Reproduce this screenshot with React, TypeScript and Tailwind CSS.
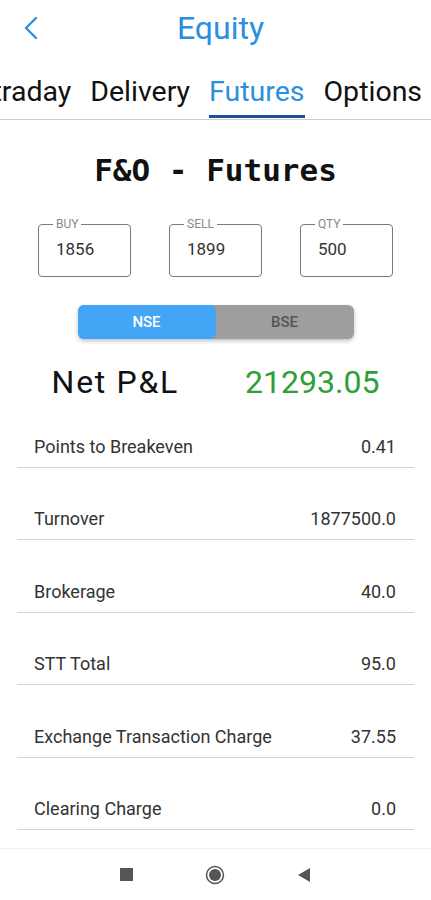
import React, { useState } from "react";

const rows: { label: string; value: string }[] = [
  { label: "Points to Breakeven", value: "0.41" },
  { label: "Turnover", value: "1877500.0" },
  { label: "Brokerage", value: "40.0" },
  { label: "STT Total", value: "95.0" },
  { label: "Exchange Transaction Charge", value: "37.55" },
  { label: "Clearing Charge", value: "0.0" },
];

const tabs = ["Intraday", "Delivery", "Futures", "Options"];

const App: React.FC = () => {
  const [exchange, setExchange] = useState<"NSE" | "BSE">("NSE");

  return (
    <div
      className="flex h-[900px] w-[431px] flex-col overflow-hidden bg-white"
      style={{ fontFamily: "Roboto, 'Noto Sans', sans-serif" }}
    >
      <div className="flex-1 overflow-hidden">
        {/* Header */}
        <div className="flex h-[56px] items-center">
          <div className="flex w-[62px] justify-start pl-[22px]">
            <svg width="18" height="26" viewBox="0 0 18 26" fill="none">
              <path
                d="M14 3 L4 13 L14 23"
                stroke="#2a8fe0"
                strokeWidth="2.4"
                strokeLinecap="round"
                strokeLinejoin="round"
              />
            </svg>
          </div>
          <div className="flex-1 text-center text-[32px] leading-[36px] text-[#2a8fe0]">
            Equity
          </div>
          <div className="w-[52px]" />
        </div>

        {/* Tabs */}
        <div className="flex h-[64px] items-end gap-[19px] overflow-hidden whitespace-nowrap border-b border-[#cfcfcf]">
          {tabs.map((t, i) => (
            <div key={t} className={`flex flex-col ${i === 0 ? "ml-[-31px]" : ""}`}>
              <span
                className={`text-[28.5px] leading-[30px] ${
                  t === "Futures" ? "text-[#2a8fe0]" : "text-[#111]"
                }`}
              >
                {t}
              </span>
              <div
                className={`mb-[1px] mt-[8px] h-[3px] ${
                  t === "Futures" ? "bg-[#1b4f99]" : "bg-transparent"
                }`}
              />
            </div>
          ))}
        </div>

        {/* Title */}
        <div
          className="mt-[32px] text-center text-[31px] font-bold leading-[36px] text-[#111]"
          style={{ fontFamily: "'DejaVu Sans Mono', 'Liberation Mono', monospace" }}
        >
          F&amp;O - Futures
        </div>

        {/* Inputs */}
        <div className="mt-[36px] flex justify-center gap-[38px]">
          {[
            { label: "BUY", value: "1856" },
            { label: "SELL", value: "1899" },
            { label: "QTY", value: "500" },
          ].map((f) => (
            <div
              key={f.label}
              className="relative flex h-[53px] w-[93px] items-center rounded-[4px] border border-[#7a7a7a] pb-[2px] pl-[17px] text-[17px] text-[#333]"
            >
              <span className="absolute left-[14px] top-[-8px] bg-white px-[3px] text-[12px] leading-[14px] text-[#888]">
                {f.label}
              </span>
              {f.value}
            </div>
          ))}
        </div>

        {/* Exchange toggle */}
        <div className="mt-[28px] flex justify-center">
          <div className="flex h-[34px] w-[276px] rounded-[6px] bg-[#9e9e9e] shadow-[0_2px_4px_rgba(0,0,0,0.25)]">
            <button
              onClick={() => setExchange("NSE")}
              className={`flex-1 rounded-[6px] text-[15px] font-medium ${
                exchange === "NSE" ? "bg-[#42a5f5] text-white" : "text-[#555]"
              }`}
            >
              NSE
            </button>
            <button
              onClick={() => setExchange("BSE")}
              className={`flex-1 rounded-[6px] text-[15px] font-medium ${
                exchange === "BSE" ? "bg-[#42a5f5] text-white" : "text-[#555]"
              }`}
            >
              BSE
            </button>
          </div>
        </div>

        {/* Net P&L */}
        <div className="mt-[30px] flex justify-center gap-[66px] text-[32px] leading-[26px]">
          <span className="tracking-[1.7px] text-[#111]">Net P&amp;L</span>
          <span className="text-[#2e9e36]">21293.05</span>
        </div>

        {/* Breakdown */}
        <div className="mx-[17px]">
          {rows.map((r) => (
            <div
              key={r.label}
              className="flex h-[72.5px] items-end justify-between border-b border-[#d4d4d4] pb-[9px] pl-[17px] pr-[18px] text-[18px] leading-[22px] text-[#333]"
            >
              <span>{r.label}</span>
              <span>{r.value}</span>
            </div>
          ))}
        </div>
      </div>

      {/* System nav */}
      <div className="flex h-[52px] items-center justify-center gap-[72px] border-t border-[#f0f0f0] bg-white">
        <div className="h-[13px] w-[13px] bg-[#555]" />
        <svg width="20" height="20" viewBox="0 0 20 20">
          <circle cx="10" cy="10" r="8.5" fill="none" stroke="#555" strokeWidth="1.5" />
          <circle cx="10" cy="10" r="6" fill="#555" />
        </svg>
        <svg width="14" height="16" viewBox="0 0 14 16">
          <path d="M13 1 L1 8 L13 15 Z" fill="#555" />
        </svg>
      </div>
    </div>
  );
};

export default App;
